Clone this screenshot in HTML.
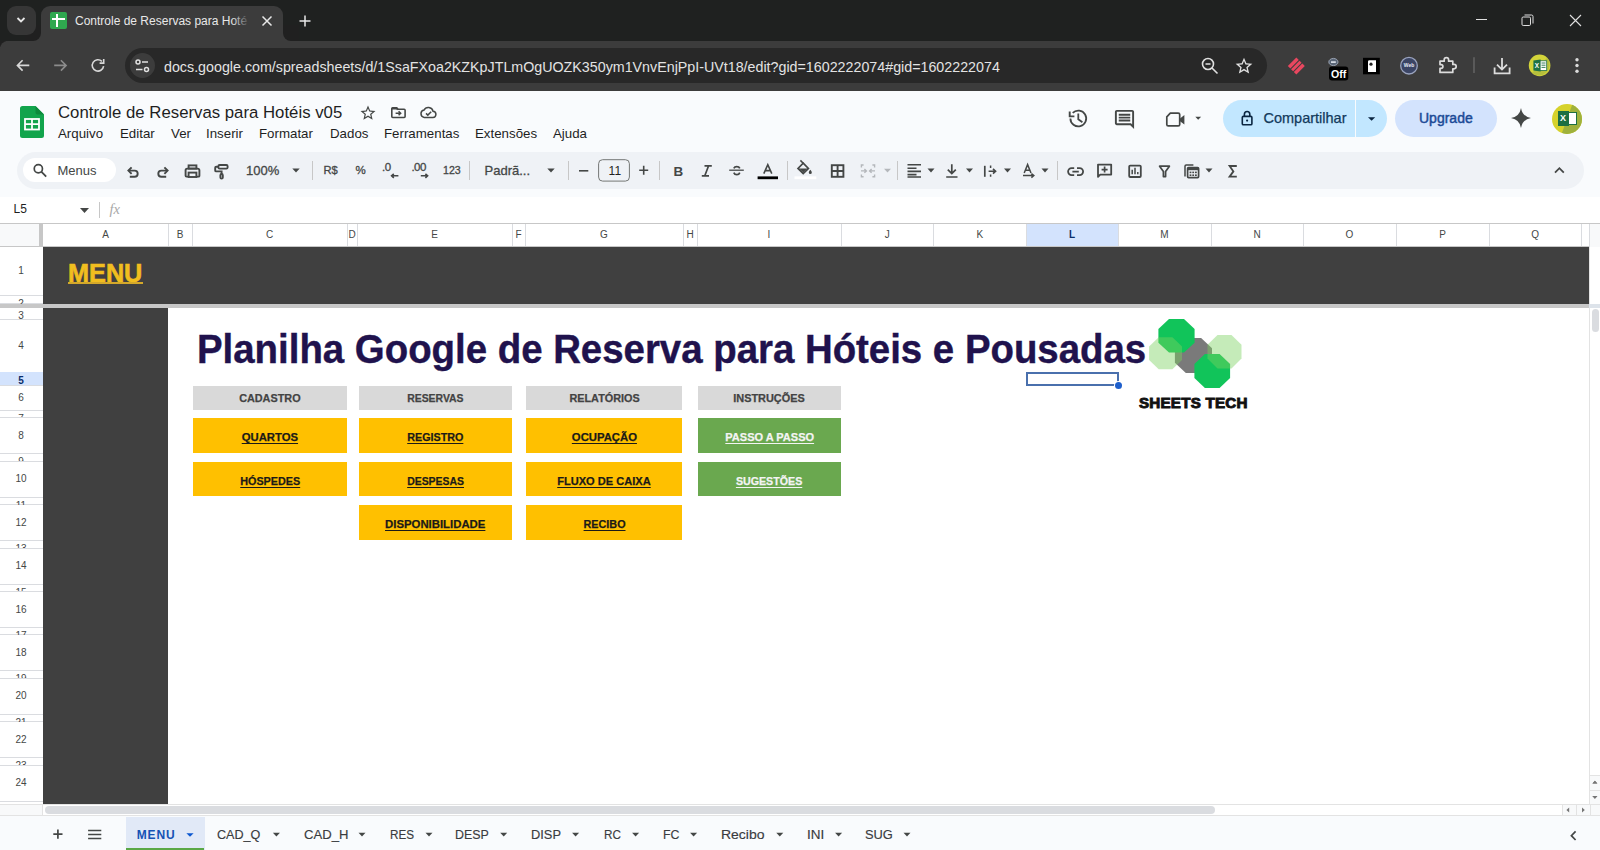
<!DOCTYPE html>
<html><head><meta charset="utf-8">
<style>
*{box-sizing:border-box;margin:0;padding:0}
html,body{width:1600px;height:850px;overflow:hidden;background:#fff;font-family:"Liberation Sans",sans-serif;position:relative}
.a{position:absolute}
.t{position:absolute;white-space:nowrap;line-height:1}
svg{position:absolute;overflow:visible}
</style></head><body>

<!-- ============ CHROME FRAME ============ -->
<div class="a" style="left:0;top:0;width:1600px;height:41px;background:#1f2120"></div>
<!-- active tab -->
<div class="a" style="left:41px;top:6px;width:242px;height:36px;background:#3c3c3c;border-radius:9px 9px 0 0"></div>
<div class="a" style="left:33px;top:33px;width:8px;height:8px;background:#3c3c3c"></div>
<div class="a" style="left:25px;top:25px;width:16px;height:16px;background:#202020;border-radius:0 0 8px 0"></div>
<div class="a" style="left:283px;top:33px;width:8px;height:8px;background:#3c3c3c"></div>
<div class="a" style="left:283px;top:25px;width:16px;height:16px;background:#202020;border-radius:0 0 0 8px"></div>
<div class="a" style="left:7px;top:6px;width:29px;height:29px;border-radius:9px;background:#363636"></div>
<svg style="left:15px;top:15px" width="12" height="10" viewBox="0 0 12 10"><path d="M2.5 3 L6 6.5 L9.5 3" fill="none" stroke="#e6e6e6" stroke-width="1.8"/></svg>

<!-- favicon -->
<div class="a" style="left:50px;top:12px;width:17px;height:17px;background:#2fa84f;border-radius:2px"></div>
<div class="a" style="left:56px;top:14px;width:2px;height:13px;background:#fff"></div>
<div class="a" style="left:52px;top:18px;width:13px;height:2px;background:#fff"></div>
<div class="t" style="left:75px;top:15.4px;font-size:12px;color:#e8e8e8">Controle de Reservas para Hoté</div>
<div class="a" style="left:232px;top:10px;width:20px;height:22px;background:linear-gradient(90deg,rgba(60,60,60,0),#3c3c3c 90%)"></div>
<svg style="left:261px;top:15px" width="12" height="12" viewBox="0 0 12 12"><path d="M1.5 1.5L10.5 10.5M10.5 1.5L1.5 10.5" stroke="#e8e8e8" stroke-width="1.5"/></svg>
<svg style="left:299px;top:15px" width="12" height="12" viewBox="0 0 12 12"><path d="M6 0.5V11.5M0.5 6H11.5" stroke="#e8e8e8" stroke-width="1.5"/></svg>
<!-- window controls -->
<div class="a" style="left:1476px;top:19px;width:11px;height:1px;background:#e0e0e0"></div>
<svg style="left:1521px;top:14px" width="13" height="13" viewBox="0 0 13 13"><rect x="1" y="3" width="8.5" height="8.5" rx="1.2" fill="none" stroke="#e0e0e0" stroke-width="1"/><path d="M3.5 1H10.5A1.5 1.5 0 0 1 12 2.5V9.5" fill="none" stroke="#e0e0e0" stroke-width="1"/></svg>
<svg style="left:1569px;top:14px" width="13" height="13" viewBox="0 0 13 13"><path d="M1 1L12 12M12 1L1 12" stroke="#e0e0e0" stroke-width="1.1"/></svg>

<!-- ============ CHROME TOOLBAR ============ -->
<div class="a" style="left:0;top:41px;width:1600px;height:50px;background:#3c3c3c"></div>
<div class="a" style="left:0;top:41px;width:6px;height:6px;background:#202020"></div><div class="a" style="left:0;top:41px;width:12px;height:12px;background:#3c3c3c;border-radius:8px 0 0 0"></div>
<!-- back / fwd / reload -->
<svg style="left:0;top:0" width="200" height="91" viewBox="0 0 200 91">
<path d="M29.3 65.4H17.6M22.6 60.2L17.4 65.4L22.6 70.6" fill="none" stroke="#d8d8d8" stroke-width="1.6"/>
<path d="M54.2 65.4H65.9M60.9 60.2L66.1 65.4L60.9 70.6" fill="none" stroke="#8c8c8c" stroke-width="1.6"/>
<path d="M103.6 66.2A5.7 5.7 0 1 1 101.9 61.3" fill="none" stroke="#d8d8d8" stroke-width="1.6"/>
<path d="M99.6 63.1H103.7V59" fill="none" stroke="#d8d8d8" stroke-width="1.6"/>
</svg>
<!-- omnibox -->
<div class="a" style="left:125px;top:48px;width:1142px;height:35px;border-radius:18px;background:#282828"></div>
<div class="a" style="left:130px;top:53px;width:25px;height:25px;border-radius:50%;background:#3c3c3c"></div>
<svg style="left:134px;top:58px" width="17" height="16" viewBox="0 0 17 16"><circle cx="4" cy="4" r="2" fill="none" stroke="#e0e0e0" stroke-width="1.5"/><path d="M8 4H14" stroke="#e0e0e0" stroke-width="1.5"/><circle cx="12.5" cy="11.5" r="2" fill="none" stroke="#e0e0e0" stroke-width="1.5"/><path d="M2 11.5H8.5" stroke="#e0e0e0" stroke-width="1.5"/></svg>
<div class="t" style="left:164px;top:58.8px;font-size:15px;color:#e3e3e3;transform:scaleX(0.951);transform-origin:0 0">docs.google.com/spreadsheets/d/1SsaFXoa2KZKpJTLmOgUOZK350ym1VnvEnjPpI-UVt18/edit?gid=1602222074#gid=1602222074</div>
<svg style="left:1201px;top:57px" width="18" height="18" viewBox="0 0 18 18"><circle cx="7" cy="7" r="5.5" fill="none" stroke="#e0e0e0" stroke-width="1.6"/><path d="M11 11L16.5 16.5M4.5 7H9.5" stroke="#e0e0e0" stroke-width="1.6"/></svg>
<svg style="left:1234px;top:56px" width="20" height="20" viewBox="0 0 24 24"><path fill="#e0e0e0" d="M22 9.24l-7.19-.62L12 2 9.19 8.63 2 9.24l5.46 4.73L5.82 21 12 17.27 18.18 21l-1.63-7.03L22 9.24zM12 15.4l-3.76 2.27 1-4.28-3.32-2.88 4.38-.38L12 6.1l1.71 4.04 4.38.38-3.32 2.88 1 4.28L12 15.4z"/></svg>
<!-- extensions -->
<svg style="left:0;top:0" width="1600" height="91" viewBox="0 0 1600 91">
<g transform="rotate(45 1296.3 66)"><rect x="1290.3" y="60" width="12" height="12" fill="#e8475f"/><path d="M1294.3 59V73M1298.3 59V73" stroke="#3c3c3c" stroke-width="1"/></g>
<ellipse cx="1333.4" cy="62" rx="4.6" ry="3.6" fill="#5a6677" stroke="#aab4c4" stroke-width="0.8"/><rect x="1331" y="61.3" width="4.8" height="1.6" fill="#e0e6ee"/>
<rect x="1329" y="66.4" width="19.3" height="14.2" rx="3" fill="#000"/>
<text x="1338.6" y="78" font-family="Liberation Sans" font-weight="bold" font-size="10.6" fill="#fff" text-anchor="middle">Off</text>
<rect x="1363" y="57.8" width="16.8" height="16.5" fill="#000"/>
<path d="M1368 61.5A1.3 1.3 0 0 1 1369.3 60.3H1376V72H1368Z" fill="#fff"/><circle cx="1371" cy="64.2" r="1.6" fill="#222"/>
<circle cx="1409" cy="65.7" r="8.3" fill="#3b4565" stroke="#9ba4bf" stroke-width="1.3"/>
<text x="1409" y="67.2" font-family="Liberation Sans" font-weight="bold" font-size="5" fill="#e8ecf5" text-anchor="middle">Web</text>
<path d="M1440 61.2H1444.2V59.8A2.2 2.2 0 0 1 1448.6 59.8V61.2H1452.8V64.4H1454A2.2 2.2 0 0 1 1454 68.8H1452.8V72.4H1440V68.4H1441A1.9 1.9 0 0 0 1441 64.6H1440Z" fill="none" stroke="#dcdcdc" stroke-width="1.7" stroke-linejoin="round"/>
<path d="M1474 57.2V73" stroke="#6e6e6e" stroke-width="1.2"/>
<path d="M1502 58V69.6M1497 64.6L1502 69.6L1507 64.6M1494.6 67.6V73.4H1509.6V67.6" fill="none" stroke="#dcdcdc" stroke-width="1.8"/>
<circle cx="1539.6" cy="65.4" r="10.8" fill="#d3d43a"/>
<path d="M1547.2 57.8A10.8 10.8 0 0 1 1532 73L1547.2 57.8Z" fill="#a9b63e" opacity="0.7"/>
<rect x="1539.5" y="60.8" width="7.2" height="9.6" fill="#fff" stroke="#1e7145" stroke-width="0.8"/>
<path d="M1541.5 63H1545.5M1541.5 65.2H1545.5M1541.5 67.4H1545.5" stroke="#1e7145" stroke-width="0.9"/>
<path d="M1533.4 60.6L1540.6 59.6V71.6L1533.4 70.6Z" fill="#1e7145"/>
<text x="1537" y="68.4" font-family="Liberation Sans" font-weight="bold" font-size="6.4" fill="#fff" text-anchor="middle">X</text>
<circle cx="1577" cy="59.8" r="1.7" fill="#dcdcdc"/><circle cx="1577" cy="65.5" r="1.7" fill="#dcdcdc"/><circle cx="1577" cy="71.2" r="1.7" fill="#dcdcdc"/>
</svg>

<!-- ============ SHEETS HEADER ============ -->
<div class="a" style="left:0;top:91px;width:1600px;height:106px;background:#f9fbfd"></div>
<!-- logo -->
<svg style="left:20px;top:106px" width="24" height="32" viewBox="0 0 24 32"><path d="M2.5 0H15.5L24 8.5V29.5A2.5 2.5 0 0 1 21.5 32H2.5A2.5 2.5 0 0 1 0 29.5V2.5A2.5 2.5 0 0 1 2.5 0Z" fill="#12a44c"/><path d="M15.5 0L24 8.5H17.5A2 2 0 0 1 15.5 6.5Z" fill="#0d8a3c"/><rect x="5" y="13" width="14" height="10.5" fill="none" stroke="#fff" stroke-width="1.8"/><path d="M5 18.2H19M12 13V23.5" stroke="#fff" stroke-width="1.8"/></svg>
<div class="t" style="left:58px;top:103.8px;font-size:17.4px;color:#1f1f1f;transform:scaleX(0.964);transform-origin:0 0">Controle de Reservas para Hotéis v05</div>
<svg style="left:359px;top:104px" width="18" height="18" viewBox="0 0 24 24"><path fill="#444746" d="M22 9.24l-7.19-.62L12 2 9.19 8.63 2 9.24l5.46 4.73L5.82 21 12 17.27 18.18 21l-1.63-7.03L22 9.24zM12 15.4l-3.76 2.27 1-4.28-3.32-2.88 4.38-.38L12 6.1l1.71 4.04 4.38.38-3.32 2.88 1 4.28L12 15.4z"/></svg>
<svg style="left:0;top:0" width="500" height="150" viewBox="0 0 500 150"><path d="M391.8 108.6A0.9 0.9 0 0 1 392.7 107.8H396.6L398 109.3H404.2A0.9 0.9 0 0 1 405.1 110.2V116.6A0.9 0.9 0 0 1 404.2 117.5H392.7A0.9 0.9 0 0 1 391.8 116.6Z" fill="none" stroke="#444746" stroke-width="1.6"/><path d="M391.8 108.4H396.8L397.8 109.6" fill="none" stroke="#444746" stroke-width="2"/><path d="M395.6 113.3H400.6M398.6 111.3L400.7 113.3L398.6 115.3" fill="none" stroke="#444746" stroke-width="1.5"/>
<path d="M424.2 117.4H432.6A3.1 3.1 0 0 0 433 111.2A4.8 4.8 0 0 0 424 110.1A3.7 3.7 0 0 0 424.2 117.4Z" fill="none" stroke="#444746" stroke-width="1.5"/><path d="M426 113.4L427.8 115.1L431.2 111.7" fill="none" stroke="#444746" stroke-width="1.5"/></svg>
<!-- menus -->
<div class="t" style="left:58px;top:127.4px;font-size:13.3px;color:#1f1f1f">Arquivo</div>
<div class="t" style="left:120px;top:127.4px;font-size:13.3px;color:#1f1f1f">Editar</div>
<div class="t" style="left:171px;top:127.4px;font-size:13.3px;color:#1f1f1f">Ver</div>
<div class="t" style="left:206px;top:127.4px;font-size:13.3px;color:#1f1f1f">Inserir</div>
<div class="t" style="left:259px;top:127.4px;font-size:13.3px;color:#1f1f1f">Formatar</div>
<div class="t" style="left:330px;top:127.4px;font-size:13.3px;color:#1f1f1f">Dados</div>
<div class="t" style="left:384px;top:127.4px;font-size:13.3px;color:#1f1f1f">Ferramentas</div>
<div class="t" style="left:475px;top:127.4px;font-size:13.3px;color:#1f1f1f">Extensões</div>
<div class="t" style="left:553px;top:127.4px;font-size:13.3px;color:#1f1f1f">Ajuda</div>
<!-- right icons -->
<svg style="left:0;top:0" width="1600" height="200" viewBox="0 0 1600 200"><path d="M1070.4 118.5A7.9 7.9 0 1 0 1072.7 112.9" fill="none" stroke="#444746" stroke-width="1.8"/><path d="M1069.7 111.6V116.4H1074.4" fill="none" stroke="#444746" stroke-width="1.9"/><path d="M1078.3 113.4V119.2L1082.4 122.3" fill="none" stroke="#444746" stroke-width="1.8"/></svg>
<svg style="left:1113px;top:108px" width="23" height="23" viewBox="0 0 24 24"><path fill="#444746" d="M21.99 4c0-1.1-.89-2-1.99-2H4c-1.1 0-2 .9-2 2v12c0 1.1.9 2 2 2h14l4 4-.01-18zM20 4v13.17L18.83 16H4V4h16zM6 12h12v2H6zm0-3h12v2H6zm0-3h12v2H6z"/></svg>
<svg style="left:0;top:0" width="1600" height="200" viewBox="0 0 1600 200"><path d="M1170.3 113.1H1178.2A1.5 1.5 0 0 1 1179.7 114.6V124.4A1.5 1.5 0 0 1 1178.2 125.9H1168.3A1.5 1.5 0 0 1 1166.8 124.4V116.8Z" fill="none" stroke="#444746" stroke-width="1.7" stroke-linejoin="round"/><path d="M1180 118.4L1184.4 115.1V124.5L1180 121.2Z" fill="#444746"/><path d="M1195.3 116.7H1201.1L1198.2 119.7Z" fill="#444746"/></svg>
<!-- share -->
<div class="a" style="left:1223px;top:100px;width:164px;height:37px;border-radius:18.5px;background:#c2e7ff"></div>
<div class="a" style="left:1355px;top:100px;width:1px;height:37px;background:#f9fbfd"></div>
<svg style="left:0;top:0" width="1600" height="200" viewBox="0 0 1600 200"><rect x="1242.3" y="116.4" width="9.6" height="8.4" rx="1.1" fill="none" stroke="#0a2540" stroke-width="1.6"/><path d="M1244.4 116.4V114.2A2.7 2.7 0 0 1 1249.8 114.2V116.4" fill="none" stroke="#0a2540" stroke-width="1.6"/><circle cx="1247.1" cy="120.6" r="1.1" fill="#0a2540"/><path d="M1368 117.2H1375.2L1371.6 120.8Z" fill="#0a2540"/></svg>
<div class="t" style="left:1263.5px;top:111.2px;font-size:14.5px;color:#123a5c;-webkit-text-stroke:0.25px #123a5c">Compartilhar</div>

<div class="a" style="left:1395px;top:100px;width:102px;height:37px;border-radius:18.5px;background:#d3e3fd"></div>
<div class="t" style="left:1419px;top:111.2px;font-size:14px;color:#1b4a96;-webkit-text-stroke:0.45px #1b4a96">Upgrade</div>
<svg style="left:1511px;top:108px" width="20" height="20" viewBox="0 0 20 20"><path d="M10 0Q11.4 8.6 20 10Q11.4 11.4 10 20Q8.6 11.4 0 10Q8.6 8.6 10 0Z" fill="#444746"/></svg>
<!-- avatar -->
<div class="a" style="left:1552px;top:104px;width:30px;height:30px;border-radius:50%;background:#d6d22c;overflow:hidden"><div class="a" style="left:15px;top:0;width:20px;height:30px;background:#9fb13c;transform:skewX(-20deg)"></div></div>
<div class="a" style="left:1558px;top:111px;width:11px;height:15px;background:#1d6f42"></div>
<div class="a" style="left:1568px;top:112px;width:9px;height:13px;background:#fff;border:1px solid #1d6f42"></div>
<div class="t" style="left:1560px;top:113.5px;font-size:9px;color:#fff;font-weight:bold">X</div>

<!-- toolbar pill -->
<div class="a" style="left:17px;top:152px;width:1567px;height:37px;border-radius:18.5px;background:#eff2f6"></div>
<div class="a" style="left:23px;top:158px;width:93px;height:24px;border-radius:12px;background:#fff"></div>
<svg style="left:0;top:0" width="100" height="200" viewBox="0 0 100 200"><circle cx="38.35" cy="168.7" r="4.1" fill="none" stroke="#444746" stroke-width="1.7"/><path d="M41.3 171.7L46.2 176.6" stroke="#444746" stroke-width="1.8"/></svg>
<div class="t" style="left:57.5px;top:164px;font-size:13px;color:#444746">Menus</div>
<svg style="left:0;top:0" width="1600" height="200" viewBox="0 0 1600 200">
<g fill="none" stroke="#444746" stroke-width="1.9" stroke-linecap="butt" stroke-linejoin="miter">
<!-- undo -->
<path d="M128.8 170.6H134.6A3.1 3.1 0 0 1 134.6 176.8H129.8"/><path d="M131.6 167.4L128.4 170.6L131.6 173.8"/>
<!-- redo -->
<path d="M167.2 170.6H161.4A3.1 3.1 0 0 0 161.4 176.8H166.2"/><path d="M164.4 167.4L167.6 170.6L164.4 173.8"/>
<!-- print -->
<rect x="188.6" y="165.4" width="7.8" height="3.2"/>
<path d="M188.6 176.6H186.4A0.8 0.8 0 0 1 185.6 175.8V170.2A1.6 1.6 0 0 1 187.2 168.6H197.8A1.6 1.6 0 0 1 199.4 170.2V175.8A0.8 0.8 0 0 1 198.6 176.6H196.4"/>
<rect x="188.6" y="172.6" width="7.8" height="4.4"/>
<!-- paint format roller -->
<rect x="218.4" y="165" width="9.2" height="3.6" rx="1.2"/>
<path d="M218.4 166.8H216.2A1 1 0 0 0 215.2 167.8V170.4A1 1 0 0 0 216.2 171.4H221.6V174"/>
<rect x="220.4" y="174" width="2.4" height="4.6" rx="1.2"/>
</g>
<!-- dropdown arrows -->
<g fill="#444746">
<path d="M292.3 168.6H299.7L296 172.6Z"/>
<path d="M547.3 168.6H554.7L551 172.6Z"/>
<path d="M927.5 168.6H934.5L931 172.4Z"/>
<path d="M966 168.6H973L969.5 172.4Z"/>
<path d="M1004 168.6H1011L1007.5 172.4Z"/>
<path d="M1041.5 168.6H1048.5L1045 172.4Z"/>
<path d="M1205.5 168.6H1212.5L1209 172.4Z"/>
<path d="M884 168.8H891L887.5 172.6Z" fill="#b4b7bb"/>
</g>
<!-- separators -->
<g stroke="#c7c7c7" stroke-width="1">
<path d="M312.5 161V180"/><path d="M469.5 161V180"/><path d="M568.5 161V180"/><path d="M659.5 161V180"/><path d="M787.5 161V180"/><path d="M897.5 161V180"/><path d="M1057.5 161V180"/>
</g>
<!-- font size -->
<path d="M579 170.8H588.3" stroke="#444746" stroke-width="1.6"/>
<rect x="598.6" y="159.7" width="30.8" height="21.4" rx="4" fill="none" stroke="#747775" stroke-width="1"/>
<path d="M639.2 170.2H648.2M643.7 165.7V174.7" stroke="#444746" stroke-width="1.6"/>
<!-- strikethrough -->
<path d="M729.2 170.2H743.8" stroke="#444746" stroke-width="1.3"/>
<path d="M733.8 168.4A3.2 2.8 0 0 1 739.8 168.4" fill="none" stroke="#444746" stroke-width="1.7"/>
<path d="M733.8 172.6A3.2 3.2 0 0 0 739.8 172.6" fill="none" stroke="#444746" stroke-width="1.7"/>
<!-- italic -->
<path d="M704.5 165.8H711.8M701.8 175.8H709M708.6 165.8L704.8 175.8" fill="none" stroke="#444746" stroke-width="1.7"/>
<!-- text color A -->
<path d="M763.8 173.6L767.8 164.6L771.8 173.6M765.2 170.6H770.4" fill="none" stroke="#444746" stroke-width="1.6"/>
<rect x="757.6" y="176.4" width="20.4" height="2.8" fill="#000"/>
<!-- fill color bucket -->
<path d="M800.4 160.4L803.2 163.2" stroke="#444746" stroke-width="1.6"/>
<path d="M803.2 163.2L808.4 168.4L803.2 173.6L798 168.4Z" fill="none" stroke="#444746" stroke-width="1.7"/>
<path d="M799 168.4H807.4L803.2 172.6Z" fill="#444746"/>
<path d="M810.3 169.8C811.3 171 811.8 171.8 811.8 172.6A1.5 1.5 0 0 1 808.8 172.6C808.8 171.8 809.3 171 810.3 169.8Z" fill="#444746"/>
<rect x="794.5" y="176.4" width="21.8" height="2.8" fill="#fff"/>
<!-- borders -->
<rect x="831.8" y="165.2" width="11.6" height="11.6" fill="none" stroke="#444746" stroke-width="1.9"/>
<path d="M837.6 165.2V176.8M831.8 171H843.4" stroke="#444746" stroke-width="1.9"/>
<!-- merge (disabled) -->
<g fill="none" stroke="#b4b7bb" stroke-width="1.4">
<path d="M863.6 165H861.4V167.4M861.4 174.4V176.8H863.6M872.4 165H874.6V167.4M874.6 174.4V176.8H872.4"/>
<path d="M861 170.9H866.2M864.4 169L866.4 170.9L864.4 172.8M875 170.9H869.8M871.6 169L869.6 170.9L871.6 172.8"/>
</g>
<!-- align left -->
<path d="M907.5 164.8H921M907.5 168.2H916.5M907.5 171.4H921M907.5 174.6H916.5M907.5 177H921" stroke="#444746" stroke-width="1.6"/>
<!-- valign bottom -->
<path d="M951.8 164.2V173.2M947.8 169.6L951.8 173.6L955.8 169.6M946.2 177H957.5" fill="none" stroke="#444746" stroke-width="1.7"/>
<!-- wrap -->
<path d="M984.8 165.8V176.8" stroke="#444746" stroke-width="1.7"/>
<path d="M990.6 165.6V168M990.6 174.4V176.8" stroke="#444746" stroke-width="1.5"/>
<path d="M988.6 171.2H995.4M993 168.8L995.6 171.2L993 173.6" fill="none" stroke="#444746" stroke-width="1.6"/>
<!-- rotate text -->
<path d="M1024.2 173L1027.6 164.6L1031 173M1025.3 170.3H1029.9" fill="none" stroke="#444746" stroke-width="1.5"/>
<path d="M1023 175.6H1033.6M1031.4 173.6L1033.8 175.6L1031.4 177.6" fill="none" stroke="#444746" stroke-width="1.5"/>
<!-- link -->
<path d="M1074.2 168.1H1071.6A3.5 3.5 0 0 0 1071.6 175.1H1074.2M1077 168.1H1079.6A3.5 3.5 0 0 1 1079.6 175.1H1077M1072.4 171.6H1078.8" fill="none" stroke="#444746" stroke-width="1.8"/>
<!-- add comment -->
<path d="M1098 164.6H1111.2V174.6H1100.2L1098 176.8Z" fill="none" stroke="#444746" stroke-width="1.8" stroke-linejoin="round"/>
<path d="M1104.6 166.6V172.6M1101.6 169.6H1107.6" stroke="#444746" stroke-width="1.7"/>
<!-- chart -->
<rect x="1129.2" y="165.6" width="11.6" height="11.4" rx="1" fill="none" stroke="#444746" stroke-width="1.8"/>
<path d="M1132.2 169.8V174.2M1135 167.8V174.2M1137.8 172V174.2" stroke="#444746" stroke-width="1.5"/>
<!-- filter -->
<path d="M1159.6 166.2H1169.4L1165.6 171.6V176.6H1163.4V171.6Z" fill="none" stroke="#444746" stroke-width="1.7" stroke-linejoin="round"/>
<!-- functions calc -->
<path d="M1185 176.4V166.2A1.2 1.2 0 0 1 1186.2 165H1193.4" fill="none" stroke="#444746" stroke-width="1.5"/>
<rect x="1187.6" y="167.6" width="11" height="10" rx="1" fill="none" stroke="#444746" stroke-width="1.7"/>
<rect x="1187.6" y="167.6" width="11" height="2.6" fill="#444746"/>
<g fill="#444746"><rect x="1189.6" y="171.6" width="1.8" height="1.6"/><rect x="1192.3" y="171.6" width="1.8" height="1.6"/><rect x="1195" y="171.6" width="1.8" height="1.6"/><rect x="1189.6" y="174.4" width="1.8" height="1.6"/><rect x="1192.3" y="174.4" width="1.8" height="1.6"/><rect x="1195" y="174.4" width="1.8" height="1.6"/></g>
<!-- sigma -->
<path d="M1236.8 166H1229.6L1233.4 171.4L1229.6 176.6H1236.8" fill="none" stroke="#444746" stroke-width="1.8"/>
<!-- collapse chevron -->
<path d="M1555 172.6L1559.4 168.2L1563.8 172.6" fill="none" stroke="#444746" stroke-width="1.8"/>
</svg>
<div class="t" style="left:246px;top:164px;font-size:13px;color:#444746;-webkit-text-stroke:0.3px #444746">100%</div>
<div class="t" style="left:323.5px;top:164.5px;font-size:11.2px;color:#444746;-webkit-text-stroke:0.3px #444746">R$</div>
<div class="t" style="left:355.5px;top:164.5px;font-size:11.5px;color:#444746;-webkit-text-stroke:0.3px #444746">%</div>
<div class="t" style="left:382px;top:162.2px;font-size:11.5px;color:#444746;letter-spacing:-0.5px;-webkit-text-stroke:0.3px #444746">.0</div>
<div class="t" style="left:411.5px;top:162.2px;font-size:11.5px;color:#444746;letter-spacing:-0.6px;-webkit-text-stroke:0.3px #444746">.00</div>
<svg style="left:0;top:0" width="1600" height="200" viewBox="0 0 1600 200"><path d="M398.4 175.8H391.6M393.8 173.8L391.6 175.8L393.8 177.8M420.8 175.8H427.6M425.4 173.8L427.6 175.8L425.4 177.8" fill="none" stroke="#444746" stroke-width="1.6"/></svg>
<div class="t" style="left:443px;top:165.2px;font-size:10.6px;color:#444746;-webkit-text-stroke:0.3px #444746">123</div>
<div class="t" style="left:484.5px;top:164px;font-size:13px;color:#444746;-webkit-text-stroke:0.3px #444746">Padrã...</div>
<div class="t" style="left:608.6px;top:164.6px;font-size:12px;color:#1f1f1f">11</div>
<div class="t" style="left:673.5px;top:164.6px;font-size:13.4px;color:#444746;font-weight:bold">B</div>



<!-- ============ FORMULA BAR ============ -->
<div class="a" style="left:0;top:197px;width:1600px;height:26px;background:#fff"></div>


<!-- ============ GRID ============ -->
<div class="t" style="left:13.6px;top:203px;font-size:12px;color:#1f1f1f">L5</div>
<svg style="left:80px;top:208px" width="9" height="5" viewBox="0 0 9 5"><path d="M0 0H9L4.5 5Z" fill="#444746"/></svg>
<div class="a" style="left:99px;top:202px;width:1px;height:16px;background:#c7c7c7"></div>
<div class="t" style="left:109.5px;top:201.5px;font-size:14.5px;color:#a8a8a8;font-family:'Liberation Serif',serif;font-style:italic">fx</div>
<div class="a" style="left:0;top:223px;width:1600px;height:1px;background:#c7c7c7"></div>
<div class="a" style="left:0;top:224px;width:1600px;height:22px;background:#fff"></div>
<div class="a" style="left:0;top:224px;width:39px;height:22px;background:#f8f9fa"></div>
<div class="a" style="left:39px;top:224px;width:4px;height:22px;background:#c7c7c7"></div>
<div class="a" style="left:1026px;top:224px;width:92px;height:22px;background:#d3e3fd"></div>
<div class="a" style="left:167.5px;top:224px;width:1px;height:22px;background:#dadce0"></div>
<div class="t" style="left:43px;width:125px;text-align:center;top:229.5px;font-size:10px;color:#444746;">A</div>
<div class="a" style="left:191.5px;top:224px;width:1px;height:22px;background:#dadce0"></div>
<div class="t" style="left:168px;width:24px;text-align:center;top:229.5px;font-size:10px;color:#444746;">B</div>
<div class="a" style="left:346.5px;top:224px;width:1px;height:22px;background:#dadce0"></div>
<div class="t" style="left:192px;width:155px;text-align:center;top:229.5px;font-size:10px;color:#444746;">C</div>
<div class="a" style="left:356.5px;top:224px;width:1px;height:22px;background:#dadce0"></div>
<div class="t" style="left:347px;width:10px;text-align:center;top:229.5px;font-size:10px;color:#444746;">D</div>
<div class="a" style="left:511.5px;top:224px;width:1px;height:22px;background:#dadce0"></div>
<div class="t" style="left:357px;width:155px;text-align:center;top:229.5px;font-size:10px;color:#444746;">E</div>
<div class="a" style="left:524.5px;top:224px;width:1px;height:22px;background:#dadce0"></div>
<div class="t" style="left:512px;width:13px;text-align:center;top:229.5px;font-size:10px;color:#444746;">F</div>
<div class="a" style="left:682.5px;top:224px;width:1px;height:22px;background:#dadce0"></div>
<div class="t" style="left:525px;width:158px;text-align:center;top:229.5px;font-size:10px;color:#444746;">G</div>
<div class="a" style="left:696.5px;top:224px;width:1px;height:22px;background:#dadce0"></div>
<div class="t" style="left:683px;width:14px;text-align:center;top:229.5px;font-size:10px;color:#444746;">H</div>
<div class="a" style="left:840.5px;top:224px;width:1px;height:22px;background:#dadce0"></div>
<div class="t" style="left:697px;width:144px;text-align:center;top:229.5px;font-size:10px;color:#444746;">I</div>
<div class="a" style="left:933.0px;top:224px;width:1px;height:22px;background:#dadce0"></div>
<div class="t" style="left:841px;width:92.5px;text-align:center;top:229.5px;font-size:10px;color:#444746;">J</div>
<div class="a" style="left:1025.5px;top:224px;width:1px;height:22px;background:#dadce0"></div>
<div class="t" style="left:933.5px;width:92.5px;text-align:center;top:229.5px;font-size:10px;color:#444746;">K</div>
<div class="a" style="left:1117.5px;top:224px;width:1px;height:22px;background:#dadce0"></div>
<div class="t" style="left:1026px;width:92px;text-align:center;top:229.5px;font-size:10px;font-weight:bold;color:#0b2e6b;">L</div>
<div class="a" style="left:1210.5px;top:224px;width:1px;height:22px;background:#dadce0"></div>
<div class="t" style="left:1118px;width:93px;text-align:center;top:229.5px;font-size:10px;color:#444746;">M</div>
<div class="a" style="left:1302.5px;top:224px;width:1px;height:22px;background:#dadce0"></div>
<div class="t" style="left:1211px;width:92px;text-align:center;top:229.5px;font-size:10px;color:#444746;">N</div>
<div class="a" style="left:1395.5px;top:224px;width:1px;height:22px;background:#dadce0"></div>
<div class="t" style="left:1303px;width:93px;text-align:center;top:229.5px;font-size:10px;color:#444746;">O</div>
<div class="a" style="left:1488.5px;top:224px;width:1px;height:22px;background:#dadce0"></div>
<div class="t" style="left:1396px;width:93px;text-align:center;top:229.5px;font-size:10px;color:#444746;">P</div>
<div class="a" style="left:1581.0px;top:224px;width:1px;height:22px;background:#dadce0"></div>
<div class="t" style="left:1489px;width:92.5px;text-align:center;top:229.5px;font-size:10px;color:#444746;">Q</div>
<div class="a" style="left:1589px;top:224px;width:11px;height:23px;background:#f8f9fa;border-left:1px solid #dadce0"></div>
<div class="a" style="left:0;top:246px;width:1589px;height:1px;background:#c7c7c7"></div>
<div class="a" style="left:0;top:247px;width:43px;height:557px;background:#fff"></div>
<div class="a" style="left:0;top:295.0px;width:43px;height:1px;background:#dadce0"></div>
<div class="a" style="left:0;top:247px;width:43px;height:48.5px;overflow:hidden"><div class="t" style="left:0;width:42px;text-align:center;top:19.39px;font-size:10px;color:#444746;">1</div></div>
<div class="a" style="left:0;top:303.1px;width:43px;height:1px;background:#dadce0"></div>
<div class="a" style="left:0;top:295.5px;width:43px;height:8.100000000000023px;overflow:hidden"><div class="t" style="left:0;width:42px;text-align:center;top:3.54px;font-size:10px;color:#444746;">2</div></div>
<div class="a" style="left:0;top:319.1px;width:43px;height:1px;background:#dadce0"></div>
<div class="a" style="left:0;top:307.8px;width:43px;height:11.800000000000011px;overflow:hidden"><div class="t" style="left:0;width:42px;text-align:center;top:3.54px;font-size:10px;color:#444746;">3</div></div>
<div class="a" style="left:0;top:371.9px;width:43px;height:1px;background:#dadce0"></div>
<div class="a" style="left:0;top:319.6px;width:43px;height:52.799999999999955px;overflow:hidden"><div class="t" style="left:0;width:42px;text-align:center;top:21.54px;font-size:10px;color:#444746;">4</div></div>
<div class="a" style="left:0;top:372.4px;width:43px;height:13.200000000000045px;background:#d3e3fd"></div>
<div class="a" style="left:0;top:385.1px;width:43px;height:1px;background:#dadce0"></div>
<div class="a" style="left:0;top:372.4px;width:43px;height:13.200000000000045px;overflow:hidden"><div class="t" style="left:0;width:42px;text-align:center;top:3.54px;font-size:10px;font-weight:bold;color:#0b2e6b;">5</div></div>
<div class="a" style="left:0;top:410.1px;width:43px;height:1px;background:#dadce0"></div>
<div class="a" style="left:0;top:385.6px;width:43px;height:25.0px;overflow:hidden"><div class="t" style="left:0;width:42px;text-align:center;top:7.64px;font-size:10px;color:#444746;">6</div></div>
<div class="a" style="left:0;top:416.9px;width:43px;height:1px;background:#dadce0"></div>
<div class="a" style="left:0;top:410.6px;width:43px;height:6.7999999999999545px;overflow:hidden"><div class="t" style="left:0;width:42px;text-align:center;top:3.54px;font-size:10px;color:#444746;">7</div></div>
<div class="a" style="left:0;top:453.3px;width:43px;height:1px;background:#dadce0"></div>
<div class="a" style="left:0;top:417.4px;width:43px;height:36.400000000000034px;overflow:hidden"><div class="t" style="left:0;width:42px;text-align:center;top:13.34px;font-size:10px;color:#444746;">8</div></div>
<div class="a" style="left:0;top:460.7px;width:43px;height:1px;background:#dadce0"></div>
<div class="a" style="left:0;top:453.8px;width:43px;height:7.399999999999977px;overflow:hidden"><div class="t" style="left:0;width:42px;text-align:center;top:3.54px;font-size:10px;color:#444746;">9</div></div>
<div class="a" style="left:0;top:496.7px;width:43px;height:1px;background:#dadce0"></div>
<div class="a" style="left:0;top:461.2px;width:43px;height:36.0px;overflow:hidden"><div class="t" style="left:0;width:42px;text-align:center;top:13.14px;font-size:10px;color:#444746;">10</div></div>
<div class="a" style="left:0;top:504.09999999999997px;width:43px;height:1px;background:#dadce0"></div>
<div class="a" style="left:0;top:497.2px;width:43px;height:7.399999999999977px;overflow:hidden"><div class="t" style="left:0;width:42px;text-align:center;top:3.54px;font-size:10px;color:#444746;">11</div></div>
<div class="a" style="left:0;top:540.0999999999999px;width:43px;height:1px;background:#dadce0"></div>
<div class="a" style="left:0;top:504.59999999999997px;width:43px;height:35.99999999999994px;overflow:hidden"><div class="t" style="left:0;width:42px;text-align:center;top:13.14px;font-size:10px;color:#444746;">12</div></div>
<div class="a" style="left:0;top:547.4999999999999px;width:43px;height:1px;background:#dadce0"></div>
<div class="a" style="left:0;top:540.5999999999999px;width:43px;height:7.399999999999977px;overflow:hidden"><div class="t" style="left:0;width:42px;text-align:center;top:3.54px;font-size:10px;color:#444746;">13</div></div>
<div class="a" style="left:0;top:583.4999999999999px;width:43px;height:1px;background:#dadce0"></div>
<div class="a" style="left:0;top:547.9999999999999px;width:43px;height:36.0px;overflow:hidden"><div class="t" style="left:0;width:42px;text-align:center;top:13.14px;font-size:10px;color:#444746;">14</div></div>
<div class="a" style="left:0;top:590.8999999999999px;width:43px;height:1px;background:#dadce0"></div>
<div class="a" style="left:0;top:583.9999999999999px;width:43px;height:7.399999999999977px;overflow:hidden"><div class="t" style="left:0;width:42px;text-align:center;top:3.54px;font-size:10px;color:#444746;">15</div></div>
<div class="a" style="left:0;top:626.8999999999999px;width:43px;height:1px;background:#dadce0"></div>
<div class="a" style="left:0;top:591.3999999999999px;width:43px;height:36.0px;overflow:hidden"><div class="t" style="left:0;width:42px;text-align:center;top:13.14px;font-size:10px;color:#444746;">16</div></div>
<div class="a" style="left:0;top:634.2999999999998px;width:43px;height:1px;background:#dadce0"></div>
<div class="a" style="left:0;top:627.3999999999999px;width:43px;height:7.399999999999977px;overflow:hidden"><div class="t" style="left:0;width:42px;text-align:center;top:3.54px;font-size:10px;color:#444746;">17</div></div>
<div class="a" style="left:0;top:670.2999999999998px;width:43px;height:1px;background:#dadce0"></div>
<div class="a" style="left:0;top:634.7999999999998px;width:43px;height:36.0px;overflow:hidden"><div class="t" style="left:0;width:42px;text-align:center;top:13.14px;font-size:10px;color:#444746;">18</div></div>
<div class="a" style="left:0;top:677.6999999999998px;width:43px;height:1px;background:#dadce0"></div>
<div class="a" style="left:0;top:670.7999999999998px;width:43px;height:7.399999999999977px;overflow:hidden"><div class="t" style="left:0;width:42px;text-align:center;top:3.54px;font-size:10px;color:#444746;">19</div></div>
<div class="a" style="left:0;top:713.6999999999998px;width:43px;height:1px;background:#dadce0"></div>
<div class="a" style="left:0;top:678.1999999999998px;width:43px;height:36.0px;overflow:hidden"><div class="t" style="left:0;width:42px;text-align:center;top:13.14px;font-size:10px;color:#444746;">20</div></div>
<div class="a" style="left:0;top:721.0999999999998px;width:43px;height:1px;background:#dadce0"></div>
<div class="a" style="left:0;top:714.1999999999998px;width:43px;height:7.399999999999977px;overflow:hidden"><div class="t" style="left:0;width:42px;text-align:center;top:3.54px;font-size:10px;color:#444746;">21</div></div>
<div class="a" style="left:0;top:757.0999999999998px;width:43px;height:1px;background:#dadce0"></div>
<div class="a" style="left:0;top:721.5999999999998px;width:43px;height:36.0px;overflow:hidden"><div class="t" style="left:0;width:42px;text-align:center;top:13.14px;font-size:10px;color:#444746;">22</div></div>
<div class="a" style="left:0;top:764.4999999999998px;width:43px;height:1px;background:#dadce0"></div>
<div class="a" style="left:0;top:757.5999999999998px;width:43px;height:7.399999999999977px;overflow:hidden"><div class="t" style="left:0;width:42px;text-align:center;top:3.54px;font-size:10px;color:#444746;">23</div></div>
<div class="a" style="left:0;top:800.4999999999998px;width:43px;height:1px;background:#dadce0"></div>
<div class="a" style="left:0;top:764.9999999999998px;width:43px;height:36.0px;overflow:hidden"><div class="t" style="left:0;width:42px;text-align:center;top:13.14px;font-size:10px;color:#444746;">24</div></div>
<div class="a" style="left:0;top:807.8999999999997px;width:43px;height:1px;background:#dadce0"></div>
<div class="a" style="left:0;top:800.9999999999998px;width:43px;height:3.0000000000002274px;overflow:hidden"><div class="t" style="left:0;width:42px;text-align:center;top:3.54px;font-size:10px;color:#444746;">25</div></div>
<div class="a" style="left:43px;top:247px;width:1546px;height:56.6px;background:#404040"></div>
<div class="a" style="left:43px;top:307.8px;width:125px;height:496.2px;background:#404040"></div>
<div class="a" style="left:0;top:303.6px;width:1589px;height:4.2px;background:#c7c7c7"></div>
<div class="a" style="left:1589px;top:303.6px;width:11px;height:4.2px;background:#dde3ea"></div>
<div class="a" style="left:1589px;top:247px;width:11px;height:557px;background:#fff;border-left:1px solid #e3e3e3"></div>
<div class="a" style="left:1589px;top:303.6px;width:11px;height:4.2px;background:#dde3ea"></div>
<div class="a" style="left:1591.5px;top:309.4px;width:7px;height:23px;border-radius:3.5px;background:#dadce0"></div>
<div class="a" style="left:1589px;top:775px;width:11px;height:29px;background:#f8f9fa;border-left:1px solid #e3e3e3;border-top:1px solid #e3e3e3"></div>
<div class="a" style="left:1590px;top:790px;width:10px;height:1px;background:#e3e3e3"></div>
<svg style="left:0;top:0" width="1600" height="850" viewBox="0 0 1600 850"><path d="M1592.4 783.6H1597.4L1594.9 780.8Z" fill="#757575"/><path d="M1592.4 796H1597.4L1594.9 798.8Z" fill="#757575"/><path d="M1569.2 807.4V812.6L1566.4 810Z" fill="#757575"/><path d="M1582 807.4V812.6L1584.8 810Z" fill="#757575"/></svg>
<div class="a" style="left:0;top:804px;width:1600px;height:12px;background:#fff;border-top:1px solid #e3e3e3;border-bottom:1px solid #e3e3e3"></div>
<div class="a" style="left:0;top:805px;width:43px;height:10px;background:#f8f9fa;border-right:1px solid #e3e3e3"></div>
<div class="a" style="left:45px;top:806px;width:1170px;height:8px;border-radius:4px;background:#dadce0"></div>
<div class="a" style="left:1561.5px;top:805px;width:28px;height:10px;background:#f8f9fa;border-left:1px solid #e3e3e3"></div>
<div class="a" style="left:1575.5px;top:805px;width:1px;height:10px;background:#e3e3e3"></div>
<div class="a" style="left:1589.5px;top:805px;width:10.5px;height:10px;background:#f8f9fa;border-left:1px solid #e3e3e3"></div>
<div class="a" style="left:1589px;top:804px;width:1px;height:1px;background:#e3e3e3"></div>
<svg style="left:0;top:0" width="1600" height="850" viewBox="0 0 1600 850"><path d="M1592.4 783.6H1597.4L1594.9 780.8Z" fill="#757575"/><path d="M1592.4 796H1597.4L1594.9 798.8Z" fill="#757575"/><path d="M1569.2 807.4V812.6L1566.4 810Z" fill="#757575"/><path d="M1582 807.4V812.6L1584.8 810Z" fill="#757575"/></svg>
<!-- CONTENT_START -->
<div class="t" style="left:68px;top:260.6px;font-size:25px;font-weight:bold;color:#f1be1f;-webkit-text-stroke:0.6px #f1be1f;transform:scaleX(1.01);transform-origin:0 0">MENU</div>
<div class="a" style="left:68px;top:282.4px;width:75px;height:2px;background:#d4a82a"></div>
<div class="t" style="left:196.9px;top:329.0px;font-size:40px;font-weight:bold;color:#20124d;-webkit-text-stroke:0.4px #20124d;transform:scaleX(0.9595);transform-origin:0 0">Planilha Google de Reserva para Hóteis e Pousadas</div>
<div class="a" style="left:193.2px;top:385.8px;width:154.2px;height:23.9px;background:#d9d9d9"></div>
<div class="t" style="left:193.2px;width:154.2px;top:392.48px;text-align:center;font-size:11.6px;font-weight:bold;color:#434343;-webkit-text-stroke:0.25px #434343"><span style="display:inline-block;transform:scaleX(0.935);">CADASTRO</span></div>
<div class="a" style="left:358.5px;top:385.8px;width:153.8px;height:23.9px;background:#d9d9d9"></div>
<div class="t" style="left:358.5px;width:153.8px;top:392.48px;text-align:center;font-size:11.6px;font-weight:bold;color:#434343;-webkit-text-stroke:0.25px #434343"><span style="display:inline-block;transform:scaleX(0.9);">RESERVAS</span></div>
<div class="a" style="left:525.9px;top:385.8px;width:156.6px;height:23.9px;background:#d9d9d9"></div>
<div class="t" style="left:525.9px;width:156.6px;top:392.48px;text-align:center;font-size:11.6px;font-weight:bold;color:#434343;-webkit-text-stroke:0.25px #434343"><span style="display:inline-block;transform:scaleX(0.935);">RELATÓRIOS</span></div>
<div class="a" style="left:697.6px;top:385.8px;width:143.4px;height:23.9px;background:#d9d9d9"></div>
<div class="t" style="left:697.6px;width:143.4px;top:392.48px;text-align:center;font-size:11.6px;font-weight:bold;color:#434343;-webkit-text-stroke:0.25px #434343"><span style="display:inline-block;transform:scaleX(0.94);">INSTRUÇÕES</span></div>
<div class="a" style="left:193.2px;top:418.4px;width:154.2px;height:34.4px;background:#ffc000"></div>
<div class="t" style="left:193.2px;width:154.2px;top:431.38px;text-align:center;font-size:11.6px;font-weight:bold;color:#1c1a17;-webkit-text-stroke:0.25px #1c1a17"><span style="display:inline-block;transform:scaleX(0.975);text-decoration:underline;text-underline-offset:1.6px;text-decoration-thickness:1.3px;">QUARTOS</span></div>
<div class="a" style="left:193.2px;top:462px;width:154.2px;height:34.1px;background:#ffc000"></div>
<div class="t" style="left:193.2px;width:154.2px;top:474.68px;text-align:center;font-size:11.6px;font-weight:bold;color:#1c1a17;-webkit-text-stroke:0.25px #1c1a17"><span style="display:inline-block;transform:scaleX(0.93);text-decoration:underline;text-underline-offset:1.6px;text-decoration-thickness:1.3px;">HÓSPEDES</span></div>
<div class="a" style="left:358.5px;top:418.4px;width:153.8px;height:34.4px;background:#ffc000"></div>
<div class="t" style="left:358.5px;width:153.8px;top:431.38px;text-align:center;font-size:11.6px;font-weight:bold;color:#1c1a17;-webkit-text-stroke:0.25px #1c1a17"><span style="display:inline-block;transform:scaleX(0.927);text-decoration:underline;text-underline-offset:1.6px;text-decoration-thickness:1.3px;">REGISTRO</span></div>
<div class="a" style="left:358.5px;top:462px;width:153.8px;height:34.1px;background:#ffc000"></div>
<div class="t" style="left:358.5px;width:153.8px;top:474.68px;text-align:center;font-size:11.6px;font-weight:bold;color:#1c1a17;-webkit-text-stroke:0.25px #1c1a17"><span style="display:inline-block;transform:scaleX(0.9);text-decoration:underline;text-underline-offset:1.6px;text-decoration-thickness:1.3px;">DESPESAS</span></div>
<div class="a" style="left:358.5px;top:505.2px;width:153.8px;height:34.4px;background:#ffc000"></div>
<div class="t" style="left:358.5px;width:153.8px;top:518.18px;text-align:center;font-size:11.6px;font-weight:bold;color:#1c1a17;-webkit-text-stroke:0.25px #1c1a17"><span style="display:inline-block;transform:scaleX(0.98);text-decoration:underline;text-underline-offset:1.6px;text-decoration-thickness:1.3px;">DISPONIBILIDADE</span></div>
<div class="a" style="left:525.9px;top:418.4px;width:156.6px;height:34.4px;background:#ffc000"></div>
<div class="t" style="left:525.9px;width:156.6px;top:431.38px;text-align:center;font-size:11.6px;font-weight:bold;color:#1c1a17;-webkit-text-stroke:0.25px #1c1a17"><span style="display:inline-block;transform:scaleX(0.975);text-decoration:underline;text-underline-offset:1.6px;text-decoration-thickness:1.3px;">OCUPAÇÃO</span></div>
<div class="a" style="left:525.9px;top:462px;width:156.6px;height:34.1px;background:#ffc000"></div>
<div class="t" style="left:525.9px;width:156.6px;top:474.68px;text-align:center;font-size:11.6px;font-weight:bold;color:#1c1a17;-webkit-text-stroke:0.25px #1c1a17"><span style="display:inline-block;transform:scaleX(0.955);text-decoration:underline;text-underline-offset:1.6px;text-decoration-thickness:1.3px;">FLUXO DE CAIXA</span></div>
<div class="a" style="left:525.9px;top:505.2px;width:156.6px;height:34.4px;background:#ffc000"></div>
<div class="t" style="left:525.9px;width:156.6px;top:518.18px;text-align:center;font-size:11.6px;font-weight:bold;color:#1c1a17;-webkit-text-stroke:0.25px #1c1a17"><span style="display:inline-block;transform:scaleX(0.93);text-decoration:underline;text-underline-offset:1.6px;text-decoration-thickness:1.3px;">RECIBO</span></div>
<div class="a" style="left:697.6px;top:418.4px;width:143.4px;height:34.4px;background:#6aa84f"></div>
<div class="t" style="left:697.6px;width:143.4px;top:431.38px;text-align:center;font-size:11.6px;font-weight:bold;color:#f4f4f4;-webkit-text-stroke:0.25px #f4f4f4"><span style="display:inline-block;transform:scaleX(0.95);text-decoration:underline;text-underline-offset:1.6px;text-decoration-thickness:1.3px;">PASSO A PASSO</span></div>
<div class="a" style="left:697.6px;top:462px;width:143.4px;height:34.1px;background:#6aa84f"></div>
<div class="t" style="left:697.6px;width:143.4px;top:474.68px;text-align:center;font-size:11.6px;font-weight:bold;color:#f4f4f4;-webkit-text-stroke:0.25px #f4f4f4"><span style="display:inline-block;transform:scaleX(0.92);text-decoration:underline;text-underline-offset:1.6px;text-decoration-thickness:1.3px;">SUGESTÕES</span></div>
<svg style="left:0;top:0" width="1600" height="850" viewBox="0 0 1600 850"><polygon points="1185.8,338.1 1201.1,338.1 1212.0,348.3 1212.0,362.8 1201.1,373.0 1185.8,373.0 1174.9,362.8 1174.9,348.3" fill="#7a7a7a" fill-opacity="1"/><polygon points="1169.0,319.1 1184.0,319.1 1194.6,328.9 1194.6,342.8 1184.0,352.6 1169.0,352.6 1158.4,342.8 1158.4,328.9" fill="#11c45a" fill-opacity="1"/><polygon points="1204.9,354.0 1219.6,354.0 1230.1,363.9 1230.1,378.0 1219.6,387.9 1204.9,387.9 1194.4,378.0 1194.4,363.9" fill="#11c45a" fill-opacity="1"/><polygon points="1158.7,337.2 1172.4,337.2 1182.0,346.6 1182.0,359.9 1172.4,369.3 1158.7,369.3 1149.1,359.9 1149.1,346.6" fill="#7bd25f" fill-opacity="0.44"/><polygon points="1217.5,334.9 1231.5,334.9 1241.5,344.7 1241.5,358.6 1231.5,368.4 1217.5,368.4 1207.5,358.6 1207.5,344.7" fill="#7bd25f" fill-opacity="0.44"/></svg>
<div class="t" style="left:1139.3px;top:396.0px;font-size:14.6px;font-weight:bold;color:#111;-webkit-text-stroke:0.9px #111;transform:scaleX(1.04);transform-origin:0 0;letter-spacing:0.2px">SHEETS TECH</div>
<div class="a" style="left:1025.6px;top:372px;width:93.6px;height:14px;border:2px solid #4a70ad"></div>
<div class="a" style="left:1115px;top:382px;width:7.2px;height:7.2px;border-radius:50%;background:#1e5fcc;box-shadow:0 0 0 1px #fff"></div>
<!-- CONTENT_END -->

<!-- ============ TABS ============ -->
<!-- TABS_START -->
<div class="a" style="left:0;top:816px;width:1600px;height:34px;background:#f9fbfd"></div>
<svg style="left:0;top:0" width="1600" height="850" viewBox="0 0 1600 850"><path d="M53.3 834.2H62.5M57.9 829.6V838.8" stroke="#444746" stroke-width="1.7"/><path d="M88.1 830.6H101.3M88.1 834.5H101.3M88.1 838.4H101.3" stroke="#444746" stroke-width="1.5"/><path d="M1575.6 831.4L1571.4 835.7L1575.6 840" fill="none" stroke="#444746" stroke-width="1.7"/></svg>
<div class="a" style="left:125.5px;top:816.5px;width:79.3px;height:33.5px;background:#e1e9f7"></div>
<div class="a" style="left:126px;top:847.8px;width:77.7px;height:2.2px;background:#5aa846"></div>
<div class="t" style="left:136.7px;top:829.4px;font-size:12px;font-weight:bold;letter-spacing:0.85px;color:#1552b5">MENU</div>
<div class="t" style="left:217px;top:828.9px;font-size:12.6px;color:#3a3c3f;-webkit-text-stroke:0.15px #3a3c3f;transform:scaleX(1);transform-origin:0 0">CAD_Q</div>
<div class="t" style="left:303.6px;top:828.9px;font-size:12.6px;color:#3a3c3f;-webkit-text-stroke:0.15px #3a3c3f;transform:scaleX(1.04);transform-origin:0 0">CAD_H</div>
<div class="t" style="left:390px;top:828.9px;font-size:12.6px;color:#3a3c3f;-webkit-text-stroke:0.15px #3a3c3f;transform:scaleX(0.93);transform-origin:0 0">RES</div>
<div class="t" style="left:455px;top:828.9px;font-size:12.6px;color:#3a3c3f;-webkit-text-stroke:0.15px #3a3c3f;transform:scaleX(0.985);transform-origin:0 0">DESP</div>
<div class="t" style="left:531px;top:828.9px;font-size:12.6px;color:#3a3c3f;-webkit-text-stroke:0.15px #3a3c3f;transform:scaleX(1.02);transform-origin:0 0">DISP</div>
<div class="t" style="left:603.7px;top:828.9px;font-size:12.6px;color:#3a3c3f;-webkit-text-stroke:0.15px #3a3c3f;transform:scaleX(0.93);transform-origin:0 0">RC</div>
<div class="t" style="left:663px;top:828.9px;font-size:12.6px;color:#3a3c3f;-webkit-text-stroke:0.15px #3a3c3f;transform:scaleX(0.98);transform-origin:0 0">FC</div>
<div class="t" style="left:721px;top:828.9px;font-size:12.6px;color:#3a3c3f;-webkit-text-stroke:0.15px #3a3c3f;transform:scaleX(1.11);transform-origin:0 0">Recibo</div>
<div class="t" style="left:806.7px;top:828.9px;font-size:12.6px;color:#3a3c3f;-webkit-text-stroke:0.15px #3a3c3f;transform:scaleX(1.07);transform-origin:0 0">INI</div>
<div class="t" style="left:865px;top:828.9px;font-size:12.6px;color:#3a3c3f;-webkit-text-stroke:0.15px #3a3c3f;transform:scaleX(1.02);transform-origin:0 0">SUG</div>
<svg style="left:0;top:0" width="1600" height="850" viewBox="0 0 1600 850"><path d="M186.4 833.2H193.6L190 836.8Z" fill="#0b57d0"/><path d="M272.9 832.8H279.9L276.4 836.4Z" fill="#444746"/><path d="M358.5 832.8H365.5L362.0 836.4Z" fill="#444746"/><path d="M425.5 832.8H432.5L429.0 836.4Z" fill="#444746"/><path d="M500.2 832.8H507.2L503.7 836.4Z" fill="#444746"/><path d="M572.1 832.8H579.1L575.6 836.4Z" fill="#444746"/><path d="M632.1 832.8H639.1L635.6 836.4Z" fill="#444746"/><path d="M690.1 832.8H697.1L693.6 836.4Z" fill="#444746"/><path d="M776.3 832.8H783.3L779.8 836.4Z" fill="#444746"/><path d="M835.1 832.8H842.1L838.6 836.4Z" fill="#444746"/><path d="M903.5 832.8H910.5L907.0 836.4Z" fill="#444746"/></svg>
<!-- TABS_END -->

</body></html>
